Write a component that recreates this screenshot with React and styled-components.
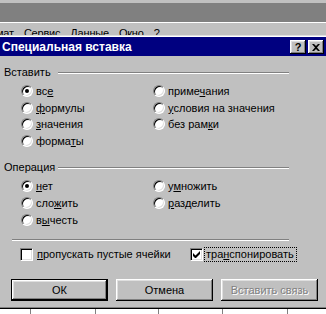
import styled, { createGlobalStyle, css } from "styled-components";

const GlobalStyle = createGlobalStyle`
    html, body {
        margin: 0;
        padding: 0;
        background: #c0c0c0;
    }
    body {
        font-family: "Liberation Sans", Arial, sans-serif;
        font-size: 11px;
        color: #000;
    }
`;

const bevel = css`
    box-shadow: inset -1px -1px #000, inset 1px 1px #fff,
        inset -2px -2px #808080, inset 2px 2px #dfdfdf;
`;

const Screen = styled.div`
    width: 326px;
    height: 314px;
    overflow: hidden;
    display: flex;
    flex-direction: column;
    background: #c0c0c0;
`;

const Toolbar = styled.div`
    flex: none;
    height: 19px;
    margin-top: 3px;
    background: #808080;
    border-bottom: 1px solid #fff;
`;

// the dialog sits over the menu bar, so only the tops of the letters show
const MenuBar = styled.div`
    flex: none;
    height: 12px;
    overflow: hidden;
    display: flex;
    gap: 10px;
    padding-top: 4px;
    box-sizing: border-box;
    line-height: 12px;
    white-space: nowrap;
    letter-spacing: -0.2px;
`;

const MenuItem = styled.span`
    ${p => p.$first && css`margin-left: -24px;`}
`;

const Dialog = styled.div`
    flex: none;
    margin-left: -4px;
    width: 334px;
    box-sizing: border-box;
    padding: 1px;
    border: 1px solid;
    border-color: #dfdfdf #000 #000 #dfdfdf;
    box-shadow: inset 1px 1px #fff, inset -1px -1px #808080;
    background: #c0c0c0;
`;

const TitleBar = styled.div`
    height: 19px;
    background: #000080;
    display: flex;
    align-items: center;
    padding: 0 4px 0 4px;
`;

const Title = styled.div`
    flex: 1;
    color: #fff;
    font-weight: bold;
    font-size: 12px;
`;

const CapButtons = styled.div`
    display: flex;
    gap: 2px;
    margin-top: 1px;
`;

const CapButton = styled.span`
    width: 16px;
    height: 14px;
    box-sizing: border-box;
    background: #c0c0c0;
    ${bevel}
    display: flex;
    align-items: center;
    justify-content: center;
    font-weight: bold;
    font-size: 11px;
    line-height: 14px;
`;

const Body = styled.div`
    padding: 8px 0 6px 6px;
`;

const GroupHeader = styled.div`
    width: 285px;
    height: 16px;
    display: grid;
    grid-template-columns: 54px 1fr;
    align-items: center;
    margin-top: ${p => p.$top}px;
`;

const Etched = styled.div`
    height: 1px;
    background: #808080;
    border-bottom: 1px solid #fff;
    margin-top: 1px;
`;

const RadioGrid = styled.div`
    display: grid;
    grid-template-columns: 132px auto;
    grid-auto-flow: column;
    grid-template-rows: repeat(${p => p.$rows}, ${p => p.$row}px);
    padding-left: 17px;
    margin-top: ${p => p.$top}px;
`;

const Option = styled.label`
    display: flex;
    align-items: center;
    gap: 3px;
    white-space: nowrap;
`;

const Radio = styled.span`
    position: relative;
    flex: none;
    width: 12px;
    height: 12px;
    box-sizing: border-box;
    border-radius: 50%;
    background: #fff;
    border: 1px solid;
    border-color: #808080 #fff #fff #808080;
    box-shadow: inset 1px 1px #000, inset -1px -1px #dfdfdf;
    ${p => p.$checked && css`
        &::after {
            content: "";
            position: absolute;
            left: 3px;
            top: 3px;
            width: 4px;
            height: 4px;
            border-radius: 50%;
            background: #000;
        }
    `}
`;

const Key = styled.span`
    text-decoration: underline;
    text-underline-offset: 1px;
`;

const Separator = styled(Etched)`
    width: 277px;
    margin: 11px 0 0 8px;
`;

const CheckRow = styled.div`
    height: 16px;
    margin-top: 5px;
    padding-left: 16px;
    display: grid;
    grid-template-columns: 170px auto;
    align-items: center;
`;

const CheckOption = styled.label`
    display: flex;
    align-items: center;
    gap: ${p => p.$gap}px;
    white-space: nowrap;
`;

const Box = styled.span`
    flex: none;
    width: 13px;
    height: 13px;
    box-sizing: border-box;
    background: #fff;
    border: 1px solid;
    border-color: #808080 #fff #fff #808080;
    box-shadow: inset 1px 1px #000, inset -1px -1px #dfdfdf;
    display: flex;
    align-items: center;
    justify-content: center;
`;

const Focus = styled.span`
    border: 1px dotted #000;
    padding: 0 2px 0 1px;
    line-height: 13px;
`;

const Buttons = styled.div`
    display: flex;
    gap: 8px;
    margin-top: 17px;
    padding-left: 7px;
`;

const Button = styled.button`
    width: 97px;
    height: 22px;
    box-sizing: border-box;
    padding: 0;
    border: none;
    background: #c0c0c0;
    font-family: inherit;
    font-size: 11px;
    font-weight: normal;
    color: #000;
    ${bevel}
    ${p => p.$default && css`
        border: 1px solid #000;
    `}
    ${p => p.disabled && css`
        color: #808080;
        text-shadow: 1px 1px #fff;
    `}
`;

const Sheet = styled.div`
    flex: 1;
    background: #fff;
    display: flex;
`;

const Cell = styled.div`
    flex: none;
    width: ${p => p.$w}px;
    border-right: 1px solid #808080;
`;

const insertOptions = [
    [["вс", "е", ""], true],
    [["", "ф", "ормулы"]],
    [["", "з", "начения"]],
    [["форма", "т", "ы"]],
    [["приме", "ч", "ания"]],
    [["", "у", "словия на значения"]],
    [["без рам", "к", "и"]],
];

const opOptions = [
    [["", "н", "ет"], true],
    [["сло", "ж", "ить"]],
    [["в", "ы", "честь"]],
    [["у", "м", "ножить"]],
    [["", "р", "азделить"]],
];

function Label({ parts }) {
    const [a, k, b] = parts;
    return <span>{a}<Key>{k}</Key>{b}</span>;
}

export default function App() {
    return (
        <Screen>
            <GlobalStyle />
            <Toolbar />
            <MenuBar>
                <MenuItem $first>Формат</MenuItem>
                <MenuItem>Сервис</MenuItem>
                <MenuItem>Данные</MenuItem>
                <MenuItem>Окно</MenuItem>
                <MenuItem>?</MenuItem>
            </MenuBar>
            <Dialog>
                <TitleBar>
                    <Title>Специальная вставка</Title>
                    <CapButtons>
                        <CapButton>?</CapButton>
                        <CapButton>
                            <svg width="8" height="7" viewBox="0 0 8 7">
                                <path d="M0 0h2l2 2 2-2h2L5 3.5 8 7H6L4 5 2 7H0l3-3.5z" fill="#000" />
                            </svg>
                        </CapButton>
                    </CapButtons>
                </TitleBar>
                <Body>
                    <GroupHeader $top={0}>
                        <span>Вставить</span>
                        <Etched />
                    </GroupHeader>
                    <RadioGrid $top={3} $rows={4} $row={16.5}>
                        {insertOptions.map(([parts, checked], i) => (
                            <Option key={i}>
                                <Radio $checked={checked} />
                                <Label parts={parts} />
                            </Option>
                        ))}
                    </RadioGrid>
                    <GroupHeader $top={10}>
                        <span>Операция</span>
                        <Etched />
                    </GroupHeader>
                    <RadioGrid $top={2} $rows={3} $row={17}>
                        {opOptions.map(([parts, checked], i) => (
                            <Option key={i}>
                                <Radio $checked={checked} />
                                <Label parts={parts} />
                            </Option>
                        ))}
                    </RadioGrid>
                    <Separator />
                    <CheckRow>
                        <CheckOption $gap={4}>
                            <Box />
                            <span><Key>п</Key>ропускать пустые ячейки</span>
                        </CheckOption>
                        <CheckOption $gap={1}>
                            <Box>
                                <svg width="7" height="7" viewBox="0 0 7 7">
                                    <path d="M0 2v3l2 2h1l4-4V0L2.5 4.5z" fill="#000" />
                                </svg>
                            </Box>
                            <Focus>тра<Key>н</Key>спонировать</Focus>
                        </CheckOption>
                    </CheckRow>
                    <Buttons>
                        <Button $default>ОК</Button>
                        <Button>Отмена</Button>
                        <Button disabled>Вставить связь</Button>
                    </Buttons>
                </Body>
            </Dialog>
            <Sheet>
                {[30, 64, 62, 63, 64, 64].map((w, i) => (
                    <Cell key={i} $w={w} />
                ))}
            </Sheet>
        </Screen>
    );
}
